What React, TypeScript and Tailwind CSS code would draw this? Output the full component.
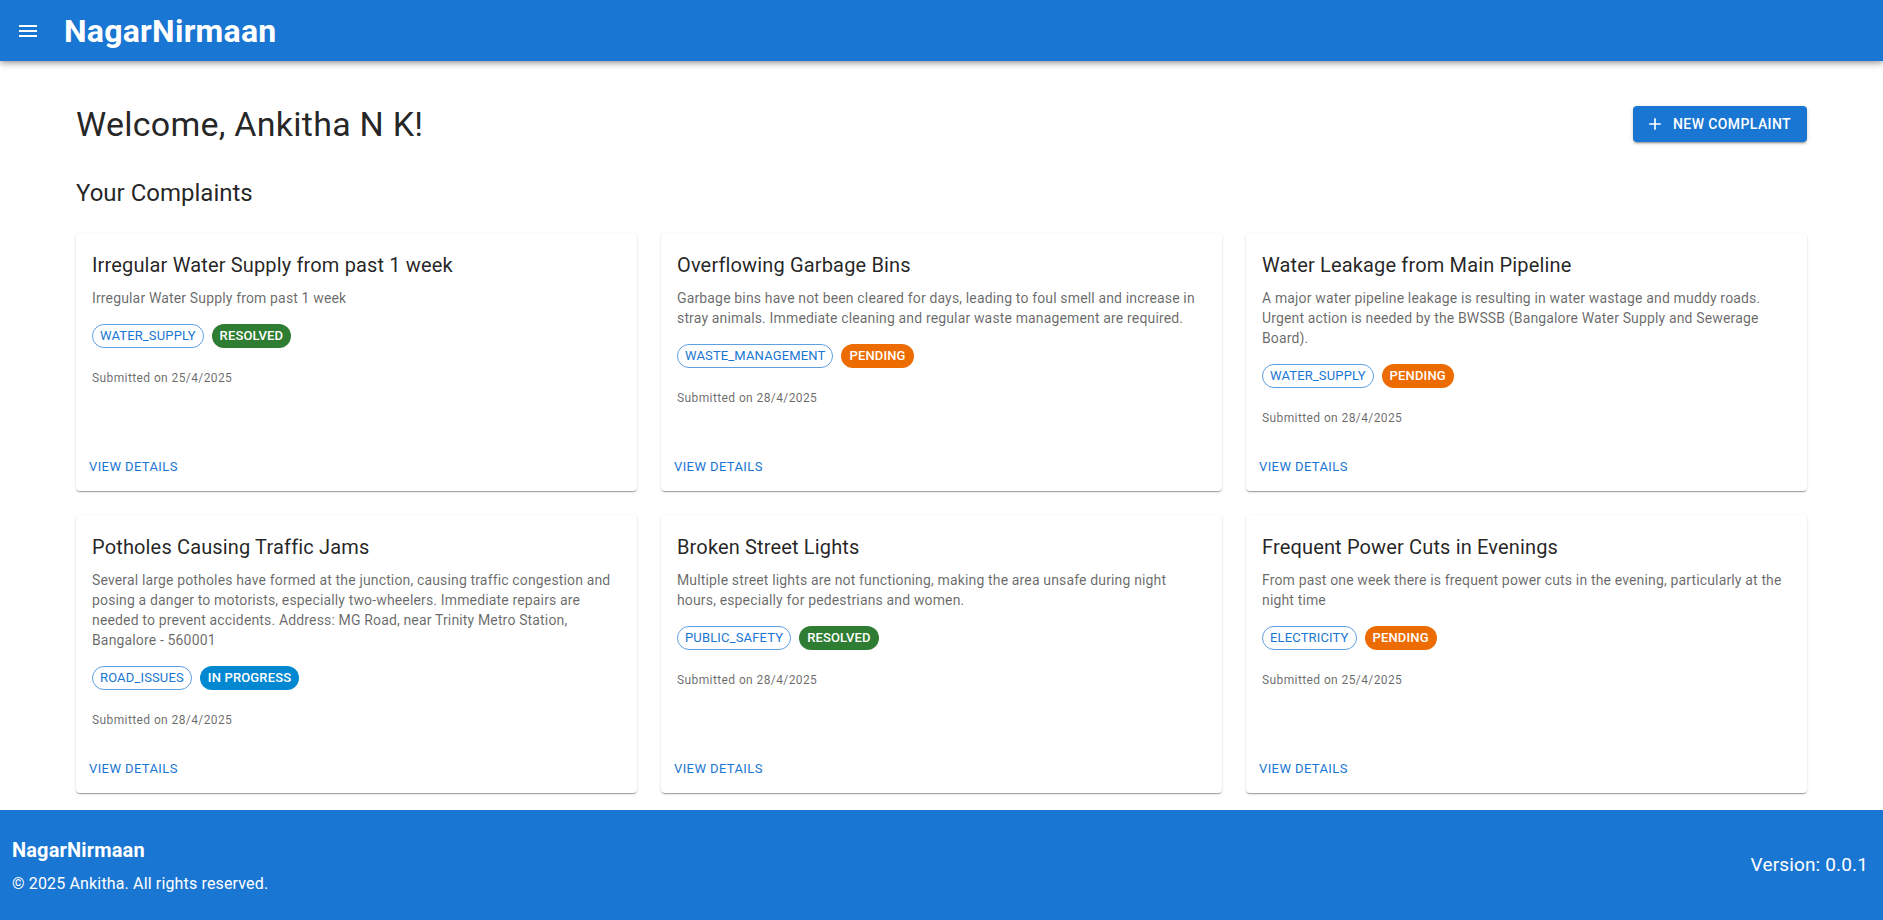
import React from 'react'

type Status = 'RESOLVED' | 'PENDING' | 'IN PROGRESS'

interface Complaint {
  title: string
  description: string
  category: string
  status: Status
  date: string
}

const complaints: Complaint[] = [
  {
    title: 'Irregular Water Supply from past 1 week',
    description: 'Irregular Water Supply from past 1 week',
    category: 'WATER_SUPPLY',
    status: 'RESOLVED',
    date: '25/4/2025',
  },
  {
    title: 'Overflowing Garbage Bins',
    description:
      'Garbage bins have not been cleared for days, leading to foul smell and increase in stray animals. Immediate cleaning and regular waste management are required.',
    category: 'WASTE_MANAGEMENT',
    status: 'PENDING',
    date: '28/4/2025',
  },
  {
    title: 'Water Leakage from Main Pipeline',
    description:
      'A major water pipeline leakage is resulting in water wastage and muddy roads. Urgent action is needed by the BWSSB (Bangalore Water Supply and Sewerage Board).',
    category: 'WATER_SUPPLY',
    status: 'PENDING',
    date: '28/4/2025',
  },
  {
    title: 'Potholes Causing Traffic Jams',
    description:
      'Several large potholes have formed at the junction, causing traffic congestion and posing a danger to motorists, especially two-wheelers. Immediate repairs are needed to prevent accidents. Address: MG Road, near Trinity Metro Station, Bangalore - 560001',
    category: 'ROAD_ISSUES',
    status: 'IN PROGRESS',
    date: '28/4/2025',
  },
  {
    title: 'Broken Street Lights',
    description:
      'Multiple street lights are not functioning, making the area unsafe during night hours, especially for pedestrians and women.',
    category: 'PUBLIC_SAFETY',
    status: 'RESOLVED',
    date: '28/4/2025',
  },
  {
    title: 'Frequent Power Cuts in Evenings',
    description:
      'From past one week there is frequent power cuts in the evening, particularly at the night time',
    category: 'ELECTRICITY',
    status: 'PENDING',
    date: '25/4/2025',
  },
]

// status chip colours (mui palette: success / warning / info)
const statusClass: Record<Status, string> = {
  RESOLVED: 'bg-[#2e7d32]',
  PENDING: 'bg-[#ed6c02]',
  'IN PROGRESS': 'bg-[#0288d1]',
}

const MenuIcon = () => (
  <svg viewBox="0 0 24 24" className="w-6 h-6 fill-white">
    <path d="M3 18h18v-2H3zm0-5h18v-2H3zm0-7v2h18V6z" />
  </svg>
)

const AddIcon = () => (
  <svg viewBox="0 0 24 24" className="w-5 h-5 fill-white">
    <path d="M19 13h-6v6h-2v-6H5v-2h6V5h2v6h6z" />
  </svg>
)

const ComplaintCard: React.FC<{ c: Complaint }> = ({ c }) => (
  <div className="flex flex-col bg-white rounded-[4px] shadow-[0_2px_1px_-1px_rgba(0,0,0,0.2),0_1px_1px_0_rgba(0,0,0,0.14),0_1px_3px_0_rgba(0,0,0,0.12)]">
    <div className="flex-1 px-4 pt-4 pb-4">
      <h3 className="text-[20px] leading-[32px] tracking-[0.15px] text-[rgba(0,0,0,0.87)] mb-[7px]">{c.title}</h3>
      <p className="text-[14px] leading-[20px] tracking-[0.15px] text-[rgba(0,0,0,0.6)] mb-4">{c.description}</p>
      <div className="flex items-center gap-2">
        <span className="h-6 inline-flex items-center px-[7px] rounded-full border border-[rgba(25,118,210,0.7)] text-[#1976d2] text-[13px] tracking-[0.15px]">
          {c.category}
        </span>
        <span className={`h-6 inline-flex items-center px-2 rounded-full text-white text-[13px] tracking-[0.15px] font-medium ${statusClass[c.status]}`}>
          {c.status}
        </span>
      </div>
      <p className="mt-5 text-[12px] leading-[20px] tracking-[0.4px] text-[rgba(0,0,0,0.6)]">Submitted on {c.date}</p>
    </div>
    <div className="p-2 flex">
      <button className="px-[5px] py-1 text-[13px] leading-[22.75px] tracking-[0.4px] text-[#1976d2] rounded-[4px] uppercase">
        View Details
      </button>
    </div>
  </div>
)

export default function App() {
  return (
    <div className="min-h-screen flex flex-col bg-white font-['Roboto',sans-serif] tracking-[0.15px]">
      <header className="h-[61px] bg-[#1976d2] flex items-center px-2 text-white shadow-[0_2px_4px_-1px_rgba(0,0,0,0.2),0_4px_5px_0_rgba(0,0,0,0.14),0_1px_10px_0_rgba(0,0,0,0.12)] z-10">
        <button className="p-2 mr-4">
          <MenuIcon />
        </button>
        <h1 className="text-[32px] leading-none font-bold tracking-[0.25px]">NagarNirmaan</h1>
      </header>

      <main className="flex-1 px-[76px] pt-[42px] pb-[14px]">
        <div className="flex items-center justify-between mb-8">
          <h2 className="text-[34px] leading-[42px] tracking-[0.25px] text-[rgba(0,0,0,0.87)]">Welcome, Ankitha N K!</h2>
          <button className="h-9 flex items-center pl-3 pr-4 rounded-[4px] bg-[#1976d2] text-white text-[14px] font-medium tracking-[0.4px] shadow-[0_3px_1px_-2px_rgba(0,0,0,0.2),0_2px_2px_0_rgba(0,0,0,0.14),0_1px_5px_0_rgba(0,0,0,0.12)]">
            <span className="mr-2">
              <AddIcon />
            </span>
            NEW COMPLAINT
          </button>
        </div>

        <h2 className="text-[24px] leading-[32px] tracking-normal text-[rgba(0,0,0,0.87)] mb-6">Your Complaints</h2>

        <div className="grid grid-cols-3 gap-6">
          {complaints.map((c, i) => (
            <ComplaintCard key={i} c={c} />
          ))}
        </div>
      </main>

      <footer className="bg-[#1976d2] text-white px-3 py-6 flex items-center justify-between">
        <div>
          <div className="text-[20px] leading-[32px] font-bold mb-[6px]">NagarNirmaan</div>
          <div className="text-[16px] leading-[24px]">© 2025 Ankitha. All rights reserved.</div>
        </div>
        <div className="text-[19px] leading-[28px] pr-[3px]">Version: 0.0.1</div>
      </footer>
    </div>
  )
}
